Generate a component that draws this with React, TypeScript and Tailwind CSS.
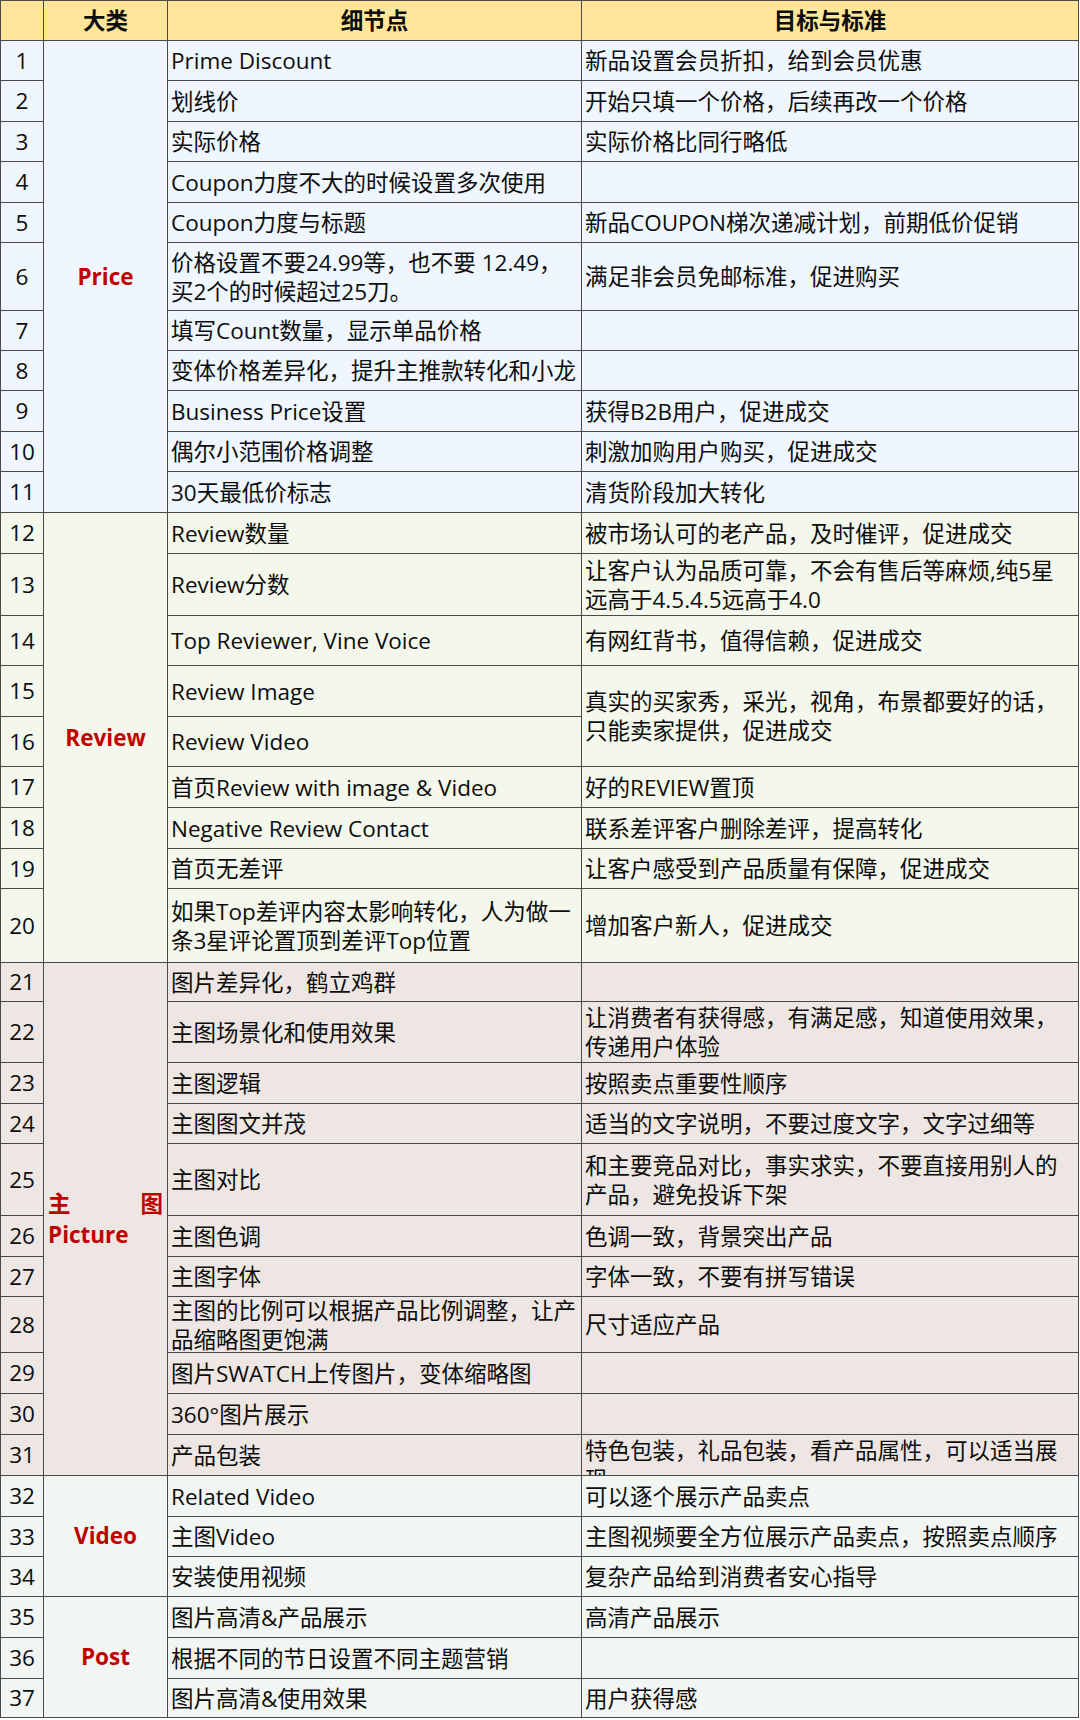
import React from "react";

type Row = {
  n: number;
  detail: string[];
  goal?: string[];
  goalSpan?: number;
  noGoalCell?: boolean;
  goalTop?: boolean;
};

type Section = {
  key: string;
  bg: string;
  label: React.ReactNode;
  rows: Row[];
};

const sections: Section[] = [
  {
    key: "price",
    bg: "bg-[#eff6fe]",
    label: <span>Price</span>,
    rows: [
      { n: 1, detail: ["Prime Discount"], goal: ["新品设置会员折扣，给到会员优惠"] },
      { n: 2, detail: ["划线价"], goal: ["开始只填一个价格，后续再改一个价格"] },
      { n: 3, detail: ["实际价格"], goal: ["实际价格比同行略低"] },
      { n: 4, detail: ["Coupon力度不大的时候设置多次使用"] },
      { n: 5, detail: ["Coupon力度与标题"], goal: ["新品COUPON梯次递减计划，前期低价促销"] },
      {
        n: 6,
        detail: ["价格设置不要24.99等，也不要 12.49，", "买2个的时候超过25刀。"],
        goal: ["满足非会员免邮标准，促进购买"],
      },
      { n: 7, detail: ["填写Count数量，显示单品价格"] },
      { n: 8, detail: ["变体价格差异化，提升主推款转化和小龙"] },
      { n: 9, detail: ["Business Price设置"], goal: ["获得B2B用户，促进成交"] },
      { n: 10, detail: ["偶尔小范围价格调整"], goal: ["刺激加购用户购买，促进成交"] },
      { n: 11, detail: ["30天最低价标志"], goal: ["清货阶段加大转化"] },
    ],
  },
  {
    key: "review",
    bg: "bg-[#f4f7eb]",
    label: <span>Review</span>,
    rows: [
      { n: 12, detail: ["Review数量"], goal: ["被市场认可的老产品，及时催评，促进成交"] },
      {
        n: 13,
        detail: ["Review分数"],
        goal: ["让客户认为品质可靠，不会有售后等麻烦,纯5星", "远高于4.5.4.5远高于4.0"],
      },
      { n: 14, detail: ["Top Reviewer, Vine Voice"], goal: ["有网红背书，值得信赖，促进成交"] },
      {
        n: 15,
        detail: ["Review Image"],
        goal: ["真实的买家秀，采光，视角，布景都要好的话，", "只能卖家提供，促进成交"],
        goalSpan: 2,
      },
      { n: 16, detail: ["Review Video"], noGoalCell: true },
      { n: 17, detail: ["首页Review with image & Video"], goal: ["好的REVIEW置顶"] },
      { n: 18, detail: ["Negative Review Contact"], goal: ["联系差评客户删除差评，提高转化"] },
      { n: 19, detail: ["首页无差评"], goal: ["让客户感受到产品质量有保障，促进成交"] },
      {
        n: 20,
        detail: ["如果Top差评内容太影响转化，人为做一", "条3星评论置顶到差评Top位置"],
        goal: ["增加客户新人，促进成交"],
      },
    ],
  },
  {
    key: "picture",
    bg: "bg-[#ede6e3]",
    label: (
      <div className="flex w-full flex-col px-[4px] text-left leading-[31px]">
        <div className="flex justify-between">
          <span>主</span>
          <span>图</span>
        </div>
        <div>Picture</div>
      </div>
    ),
    rows: [
      { n: 21, detail: ["图片差异化，鹤立鸡群"] },
      {
        n: 22,
        detail: ["主图场景化和使用效果"],
        goal: ["让消费者有获得感，有满足感，知道使用效果，", "传递用户体验"],
      },
      { n: 23, detail: ["主图逻辑"], goal: ["按照卖点重要性顺序"] },
      { n: 24, detail: ["主图图文并茂"], goal: ["适当的文字说明，不要过度文字，文字过细等"] },
      {
        n: 25,
        detail: ["主图对比"],
        goal: ["和主要竞品对比，事实求实，不要直接用别人的", "产品，避免投诉下架"],
      },
      { n: 26, detail: ["主图色调"], goal: ["色调一致，背景突出产品"] },
      { n: 27, detail: ["主图字体"], goal: ["字体一致，不要有拼写错误"] },
      {
        n: 28,
        detail: ["主图的比例可以根据产品比例调整，让产", "品缩略图更饱满"],
        goal: ["尺寸适应产品"],
      },
      { n: 29, detail: ["图片SWATCH上传图片，变体缩略图"] },
      { n: 30, detail: ["360°图片展示"] },
      {
        n: 31,
        detail: ["产品包装"],
        goal: ["特色包装，礼品包装，看产品属性，可以适当展", "现"],
        goalTop: true,
      },
    ],
  },
  {
    key: "video",
    bg: "bg-[#f2f6f3]",
    label: <span>Video</span>,
    rows: [
      { n: 32, detail: ["Related Video"], goal: ["可以逐个展示产品卖点"] },
      { n: 33, detail: ["主图Video"], goal: ["主图视频要全方位展示产品卖点，按照卖点顺序"] },
      { n: 34, detail: ["安装使用视频"], goal: ["复杂产品给到消费者安心指导"] },
    ],
  },
  {
    key: "post",
    bg: "bg-[#f2f6f3]",
    label: <span>Post</span>,
    rows: [
      { n: 35, detail: ["图片高清&产品展示"], goal: ["高清产品展示"] },
      { n: 36, detail: ["根据不同的节日设置不同主题营销"] },
      { n: 37, detail: ["图片高清&使用效果"], goal: ["用户获得感"] },
    ],
  },
];

const spanClass: Record<number, string> = {
  2: "row-span-2",
  3: "row-span-3",
  9: "row-span-9",
  11: "row-span-11",
};

const cellBase = "border-r border-b border-[#4a4a4a] overflow-hidden";

function Lines({ lines }: { lines: string[] }) {
  return (
    <div className="flex flex-col leading-[29px] whitespace-nowrap">
      {lines.map((l, i) => (
        <div key={i}>{l}</div>
      ))}
    </div>
  );
}

export default function App() {
  return (
    <div className="min-h-[1720px] bg-white">
      <div
        className="grid w-[1079px] grid-cols-[43px_124px_414px_497px] grid-rows-[40px_40px_41px_40px_41px_40px_68px_40px_40px_41px_40px_41px_41px_62px_50px_51px_50px_41px_41px_40px_74px_39px_61px_41px_40px_72px_41px_40px_56px_41px_41px_41px_41px_40px_40px_41px_41px_39px] border-l border-t border-[#4a4a4a] text-[22.5px] text-[#0d0d0d]"
        style={{ fontFamily: '"Open Sans", "Noto Sans CJK SC", sans-serif' }}
      >
        {/* header */}
        <div className={`${cellBase} col-start-1 bg-[#ffe699]`} />
        <div className={`${cellBase} col-start-2 flex items-center justify-center bg-[#ffe699] font-bold`}>
          大类
        </div>
        <div className={`${cellBase} col-start-3 flex items-center justify-center bg-[#ffe699] font-bold`}>
          细节点
        </div>
        <div className={`${cellBase} col-start-4 flex items-center justify-center bg-[#ffe699] font-bold`}>
          目标与标准
        </div>

        {sections.map((s) =>
          s.rows.map((r, i) => (
            <React.Fragment key={r.n}>
              <div className={`${cellBase} ${s.bg} col-start-1 flex items-center justify-center`}>
                {r.n}
              </div>
              {i === 0 && (
                <div
                  className={`${cellBase} ${s.bg} ${spanClass[s.rows.length]} col-start-2 flex items-center justify-center font-bold text-[#c00000]`}
                >
                  {s.label}
                </div>
              )}
              <div className={`${cellBase} ${s.bg} col-start-3 flex items-center pl-[3px]`}>
                <Lines lines={r.detail} />
              </div>
              {!r.noGoalCell && (
                <div
                  className={`${cellBase} ${s.bg} ${r.goalSpan ? spanClass[r.goalSpan] : ""} col-start-4 flex pl-[3px] ${
                    r.goalTop ? "items-start pt-px" : "items-center"
                  }`}
                >
                  {r.goal && <Lines lines={r.goal} />}
                </div>
              )}
            </React.Fragment>
          ))
        )}
      </div>
    </div>
  );
}
